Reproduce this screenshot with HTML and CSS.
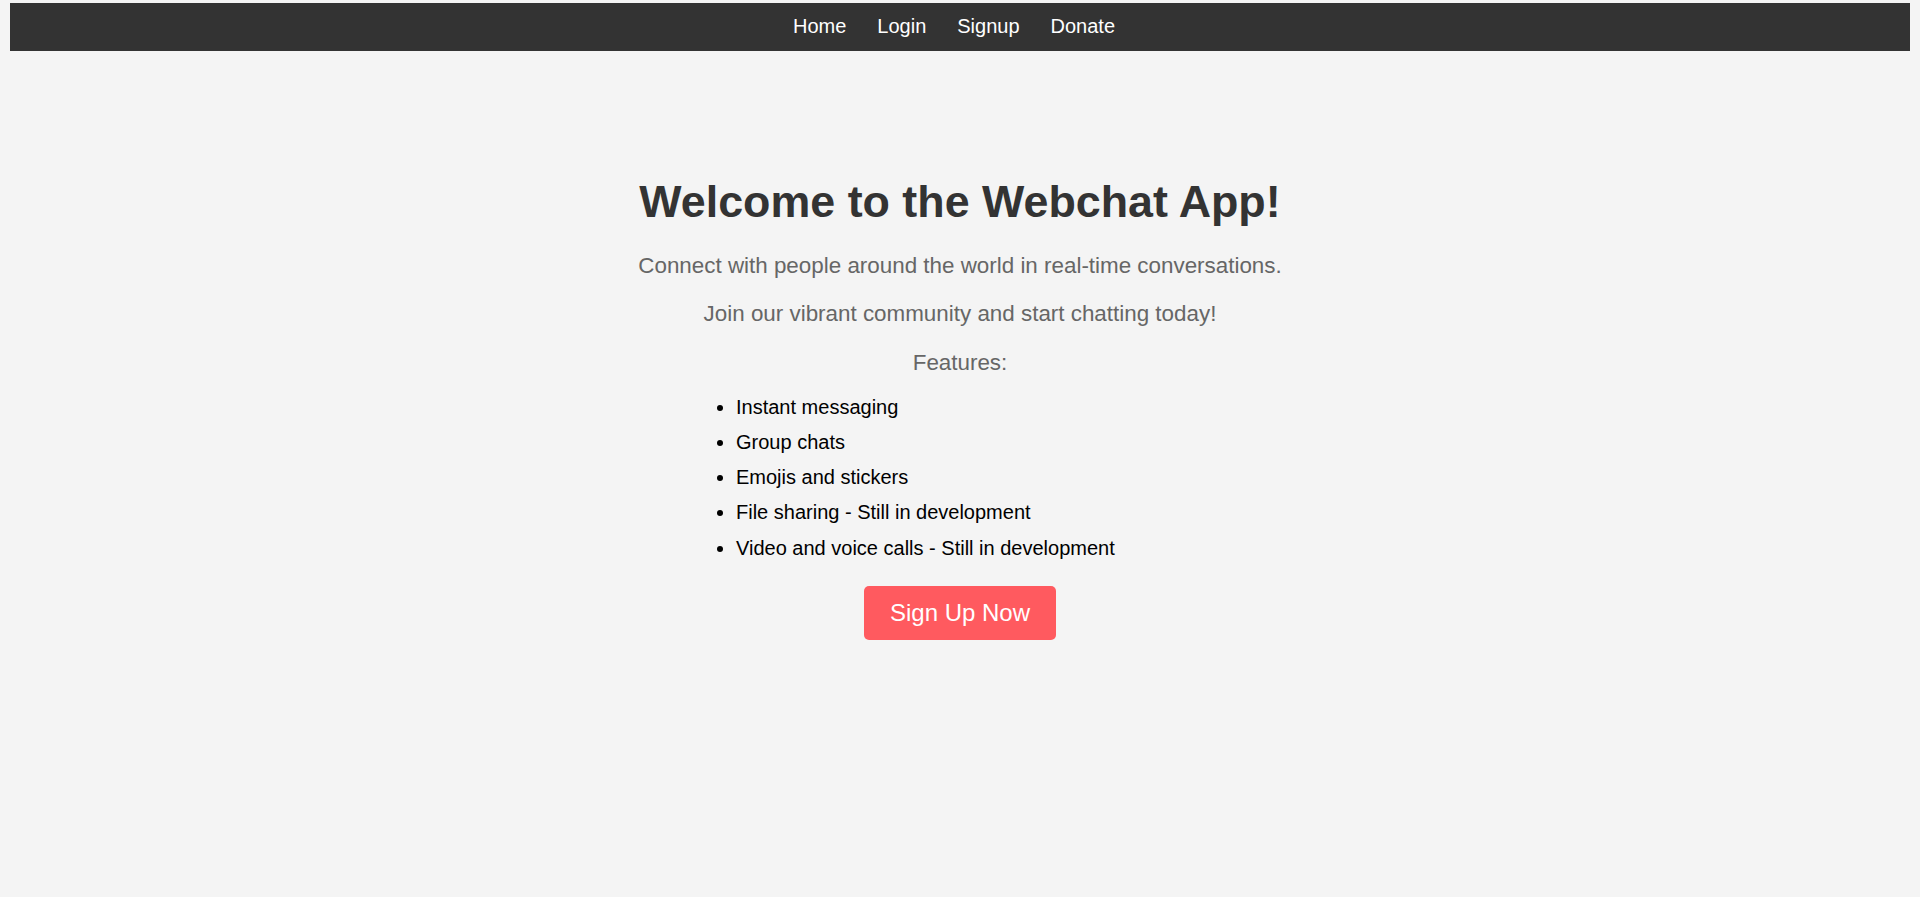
FILE: index.html
```html
<!DOCTYPE html>
<html lang="en">
<head>
<meta charset="utf-8">
<title>Webchat App</title>
<link rel="stylesheet" href="styles.css">
</head>
<body>
  <nav class="navbar">
    <a href="#" class="nav-link">Home</a>
    <a href="#" class="nav-link">Login</a>
    <a href="#" class="nav-link">Signup</a>
    <a href="#" class="nav-link">Donate</a>
  </nav>
  <main class="hero">
    <h1 class="hero-title">Welcome to the Webchat App!</h1>
    <p class="hero-text">Connect with people around the world in real-time conversations.</p>
    <p class="hero-text">Join our vibrant community and start chatting today!</p>
    <p class="hero-text">Features:</p>
    <ul class="features">
      <li>Instant messaging</li>
      <li>Group chats</li>
      <li>Emojis and stickers</li>
      <li>File sharing - Still in development</li>
      <li>Video and voice calls - Still in development</li>
    </ul>
    <div class="cta-wrap">
      <a href="#" class="cta">Sign Up Now</a>
    </div>
  </main>
</body>
</html>
```
FILE: styles.css
```css
html {
  background: #f4f4f4;
}
body {
  margin: 3px 10px 0;
  background: #f4f4f4;
  font-family: "Liberation Sans", Arial, sans-serif;
  font-size: 16px;
}
.navbar {
  box-sizing: border-box;
  height: 48px;
  padding: 12px 12px 0 0;
  background: #333;
  display: flex;
  justify-content: center;
  gap: 31px;
}
.nav-link {
  color: #fff;
  text-decoration: none;
  font-size: 20px;
  line-height: normal;
}
.hero {
  padding-top: 125px;
  text-align: center;
}
.hero-title {
  margin: 0 0 26px;
  font-size: 44.8px;
  font-weight: bold;
  color: #333;
}
.hero-text {
  margin: 22.4px 0;
  font-size: 22.4px;
  color: #666;
}
.features {
  width: max-content;
  margin: -2.5px 0 26px 686px;
  padding-left: 40px;
  text-align: left;
  color: #000;
  font-size: 20px;
}
.features li + li {
  margin-top: 12.25px;
}
.cta-wrap {
  text-align: center;
}
.cta {
  display: inline-block;
  padding: 13px 25.5px;
  background: #ff5a5f;
  color: #fff;
  font-size: 24px;
  text-decoration: none;
  border-radius: 5px;
}
```
